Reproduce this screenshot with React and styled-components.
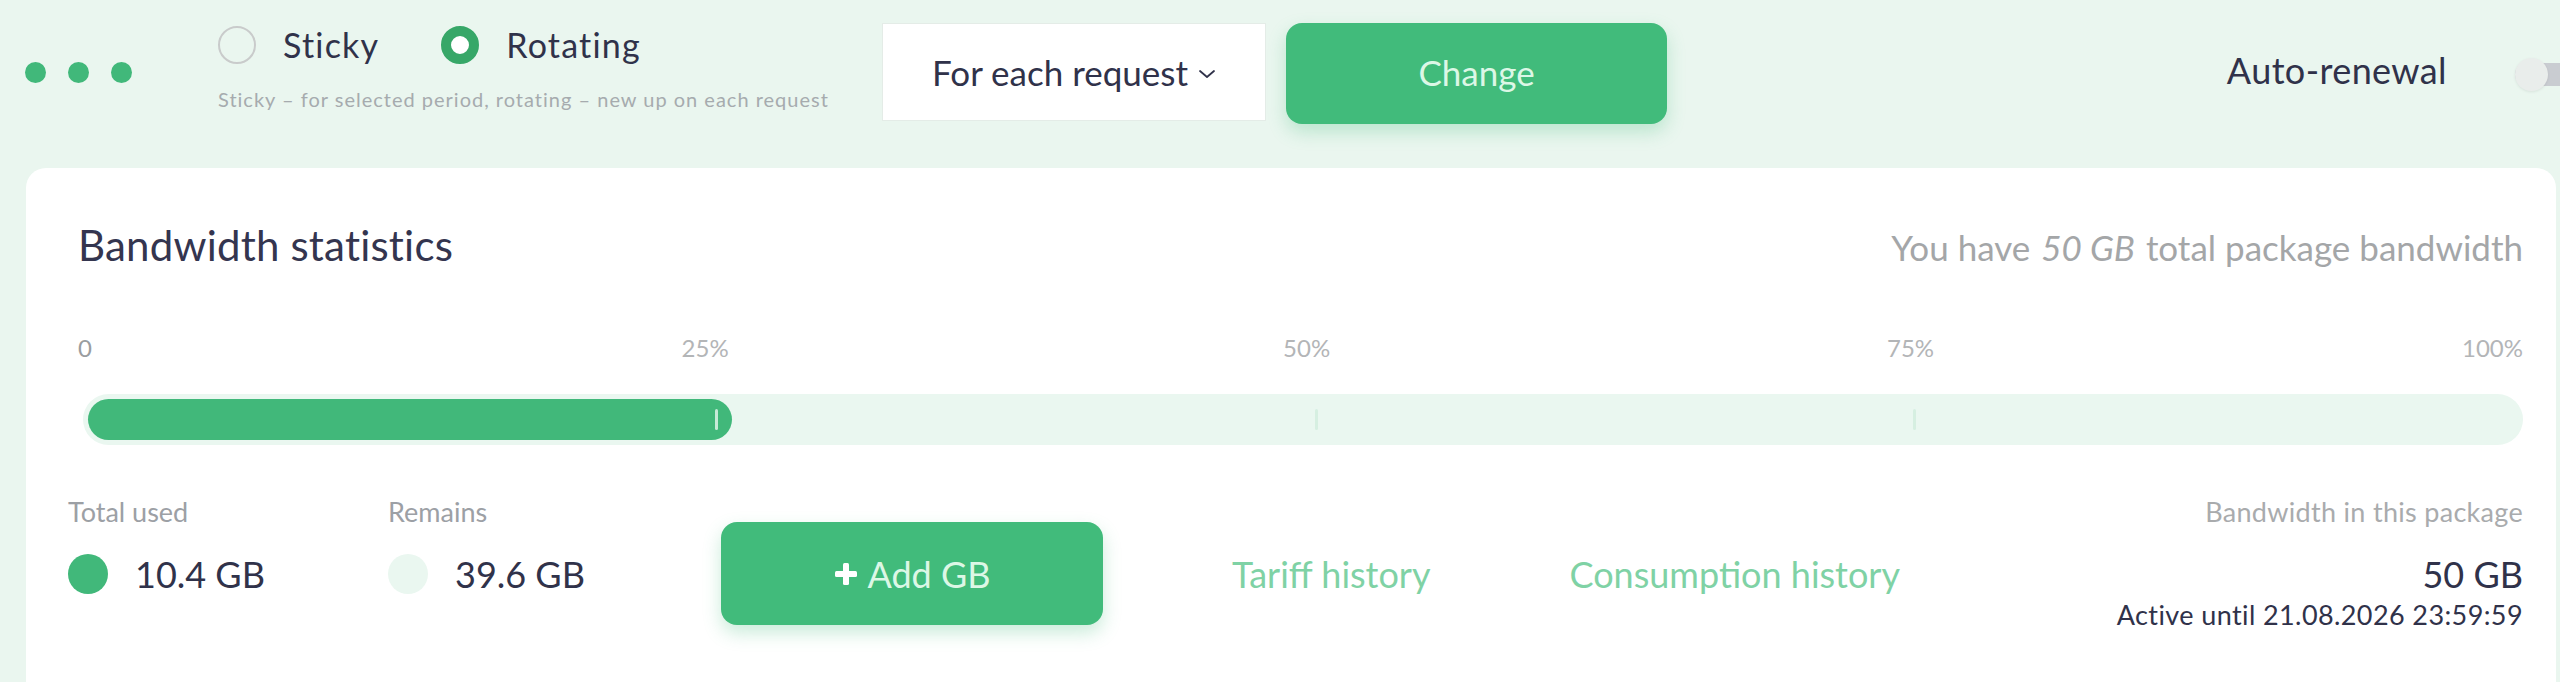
import styled, { createGlobalStyle } from 'styled-components'

const GlobalStyle = createGlobalStyle`
	body {
		margin: 0;
		background: #eaf6ef;
		font-family: Lato, "Noto Sans", sans-serif;
	}
`

const Page = styled.div`
	height: 682px;
	overflow: hidden;
	background: #eaf6ef;
	color: #30324a;
	line-height: 1.2;
`

const TopBar = styled.div`
	display: flex;
	align-items: flex-start;
	height: 168px;
	box-sizing: border-box;
	padding: 23px 0 0 25px;
	overflow: hidden;
`

const Dots = styled.div`
	display: flex;
	gap: 22px;
	margin-top: 39px;
	width: 107px;
	flex-shrink: 0;
`

const Dot = styled.span`
	width: 21px;
	height: 21px;
	border-radius: 50%;
	background: #41b87a;
`

const RadioBlock = styled.div`
	width: 664px;
	margin: 2px 0 0 86px;
	flex-shrink: 0;
`

const RadioRow = styled.div`
	display: flex;
	align-items: center;
	gap: 62px;
`

const RadioOption = styled.label`
	display: flex;
	align-items: center;
	gap: 27px;
	font-size: 34px;
	letter-spacing: 1.2px;
	color: #30324a;
`

const RadioCircle = styled.span`
	width: 38px;
	height: 38px;
	box-sizing: border-box;
	border-radius: 50%;
	border: ${(p) => (p.checked ? '10px solid #37a768' : '2px solid #c9cbcb')};
	background: ${(p) => (p.checked ? '#ffffff' : 'transparent')};
`

const Hint = styled.div`
	margin-top: 21px;
	font-size: 20px;
	letter-spacing: 1px;
	color: #a6abae;
	white-space: nowrap;
`

const Select = styled.div`
	width: 384px;
	height: 98px;
	box-sizing: border-box;
	flex-shrink: 0;
	display: flex;
	align-items: center;
	justify-content: center;
	gap: 10px;
	background: #ffffff;
	border: 1px solid #e4ece7;
	font-size: 35px;
	color: #30324a;

	svg {
		margin-top: 4px;
	}
`

const Button = styled.button`
	flex-shrink: 0;
	width: ${(p) => p.width}px;
	height: 101px;
	border: none;
	border-radius: 16px;
	background: #41bb7b;
	color: #dcf7e6;
	font-family: inherit;
	font-size: 35px;
	display: flex;
	align-items: center;
	justify-content: center;
	gap: 8px;
	box-shadow: 0 8px 18px rgba(65, 187, 123, 0.28);
	cursor: pointer;
`

const ChangeButton = styled(Button)`
	margin-left: 20px;
	padding-bottom: 5px;
`

const RightGroup = styled.div`
	margin-left: auto;
	display: flex;
	align-items: flex-start;
	flex-shrink: 0;
`

const AutoRenewal = styled.span`
	margin-top: 26px;
	font-size: 36px;
	letter-spacing: 0.4px;
	color: #30324a;
`

const Toggle = styled.span`
	position: relative;
	margin: 35px -31px 0 68px;
	width: 76px;
	height: 33px;
	display: flex;
	align-items: center;
	flex-shrink: 0;
`

const ToggleTrack = styled.span`
	width: 100%;
	height: 23px;
	border-radius: 12px;
	background: #c9ccd1;
`

const ToggleKnob = styled.span`
	position: absolute;
	left: 0;
	top: 0;
	width: 33px;
	height: 33px;
	border-radius: 50%;
	background: #e9edeb;
	box-shadow: 0 1px 3px rgba(0, 0, 0, 0.08);
`

const Card = styled.div`
	margin: 0 4px 0 26px;
	height: 560px;
	box-sizing: border-box;
	padding: 52px 33px 0 42px;
	background: #ffffff;
	border-radius: 20px;
`

const Chart = styled.div`
	margin-left: 10px;
`

const Header = styled.div`
	display: flex;
	justify-content: space-between;
	align-items: baseline;
`

const Title = styled.h2`
	margin: 0;
	font-size: 42px;
	font-weight: 400;
	letter-spacing: 0.2px;
	color: #34354f;
`

const Total = styled.div`
	font-size: 35px;
	color: #a4a6a8;

	em {
		margin: 0 2px;
	}
`

const Scale = styled.div`
	position: relative;
	height: 29px;
	margin-top: 64px;
	font-size: 24px;
	color: #a8aaac;
`

const AxisLabel = styled.span`
	position: absolute;
	top: 0;
	left: ${(p) => p.at}%;
	transform: translateX(${(p) => (p.at === 0 ? '0' : p.at === 100 ? '-100%' : '-50%')});
	color: ${(p) => (p.at === 0 ? '#9a9da0' : '#b3b5b7')};
`

const Track = styled.div`
	position: relative;
	margin: 31px 0 0 5px;
	height: 51px;
	box-sizing: border-box;
	padding: 5px;
	border-radius: 26px;
	background: #eaf7f0;
`

const Fill = styled.div`
	height: 100%;
	border-radius: 21px;
	background: #41b87a;
`

const Tick = styled.span`
	position: absolute;
	top: 15px;
	width: 3px;
	height: 21px;
	border-radius: 2px;
	background: ${(p) => (p.onFill ? 'rgba(255,255,255,0.7)' : '#d6efe1')};
`

const Bottom = styled.div`
	display: flex;
	align-items: flex-start;
	margin-top: 51px;
`

const Stat = styled.div`
	width: ${(p) => p.width}px;
	flex-shrink: 0;
`

const StatLabel = styled.div`
	font-size: 27px;
	color: #9ca0a5;
`

const StatValue = styled.div`
	display: flex;
	align-items: center;
	gap: 27px;
	margin-top: 24px;
	font-size: 36px;
	color: #30324a;
`

const StatDot = styled.span`
	width: 40px;
	height: 40px;
	border-radius: 50%;
	background: ${(p) => p.color};
`

const AddButton = styled(Button)`
	margin-top: 26px;
	height: 103px;
	font-size: 36px;
`

const Link = styled.a`
	margin: 57px 0 0 ${(p) => p.offset}px;
	font-size: 36px;
	color: #7fd2a5;
	text-decoration: none;
	cursor: pointer;
`

const Package = styled.div`
	margin-left: auto;
	text-align: right;
`

const PackageLabel = styled.div`
	font-size: 27px;
	letter-spacing: 0.3px;
	color: #a9abad;
`

const PackageSize = styled.div`
	margin-top: 24px;
	font-size: 36px;
	color: #30324a;
`

const ActiveUntil = styled.div`
	margin-top: 3px;
	font-size: 27px;
	letter-spacing: 0.4px;
	color: #30324a;
`

const Chevron = () => (
	<svg width="18" height="10" viewBox="0 0 18 10" fill="none">
		<polyline points="2,2 9,8 16,2" stroke="#30324a" strokeWidth="1.8" strokeLinecap="round" strokeLinejoin="round" />
	</svg>
)

const Plus = () => (
	<svg width="26" height="26" viewBox="0 0 26 26">
		<rect x="10" y="2" width="6" height="22" rx="1.5" fill="#ffffff" />
		<rect x="2" y="10" width="22" height="6" rx="1.5" fill="#ffffff" />
	</svg>
)

const used = 26.5
const axis = [
	{ label: '0', at: 0 },
	{ label: '25%', at: 25.65 },
	{ label: '50%', at: 50.25 },
	{ label: '75%', at: 74.95 },
	{ label: '100%', at: 100 },
]

const App = () => {
	return (
		<Page>
			<GlobalStyle />
			<TopBar>
				<Dots>
					<Dot />
					<Dot />
					<Dot />
				</Dots>
				<RadioBlock>
					<RadioRow>
						<RadioOption>
							<RadioCircle />
							Sticky
						</RadioOption>
						<RadioOption>
							<RadioCircle checked />
							Rotating
						</RadioOption>
					</RadioRow>
					<Hint>Sticky – for selected period, rotating – new up on each request</Hint>
				</RadioBlock>
				<Select>
					For each request <Chevron />
				</Select>
				<ChangeButton width={381}>Change</ChangeButton>
				<RightGroup>
					<AutoRenewal>Auto-renewal</AutoRenewal>
					<Toggle>
						<ToggleTrack />
						<ToggleKnob />
					</Toggle>
				</RightGroup>
			</TopBar>

			<Card>
				<Chart>
					<Header>
						<Title>Bandwidth statistics</Title>
						<Total>
							You have <em>50 GB</em> total package bandwidth
						</Total>
					</Header>
					<Scale>
						{axis.map((a) => (
							<AxisLabel key={a.label} at={a.at}>
								{a.label}
							</AxisLabel>
						))}
					</Scale>
					<Track>
						<Fill style={{ width: `${used}%` }} />
						<Tick onFill style={{ left: '25.9%' }} />
						<Tick style={{ left: '50.5%' }} />
						<Tick style={{ left: '75%' }} />
					</Track>
				</Chart>
				<Bottom>
					<Stat width={320}>
						<StatLabel>Total used</StatLabel>
						<StatValue>
							<StatDot color="#41b87a" />
							10.4 GB
						</StatValue>
					</Stat>
					<Stat width={333}>
						<StatLabel>Remains</StatLabel>
						<StatValue>
							<StatDot color="#eaf7f0" />
							39.6 GB
						</StatValue>
					</Stat>
					<AddButton width={382}>
						<Plus />
						Add GB
					</AddButton>
					<Link offset={129}>Tariff history</Link>
					<Link offset={139}>Consumption history</Link>
					<Package>
						<PackageLabel>Bandwidth in this package</PackageLabel>
						<PackageSize>50 GB</PackageSize>
						<ActiveUntil>Active until 21.08.2026 23:59:59</ActiveUntil>
					</Package>
				</Bottom>
			</Card>
		</Page>
	)
}

export default App
